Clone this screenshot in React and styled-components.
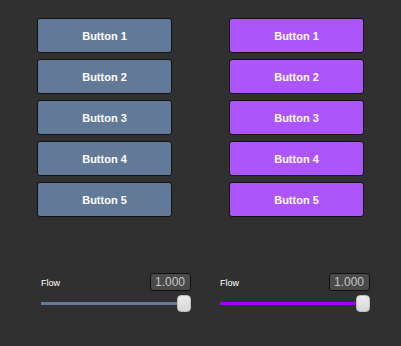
import React from 'react';
import styled, { createGlobalStyle } from 'styled-components';

const GlobalStyle = createGlobalStyle`
    body {
        margin: 0;
        background: #303030;
        font-family: "Liberation Sans", Arial, sans-serif;
    }
`;

const Page = styled.div`
    width: 401px;
    height: 346px;
    background: #303030;
    box-sizing: border-box;
    padding-top: 18px;
`;

const ButtonGrid = styled.div`
    display: grid;
    grid-template-columns: 135px 135px;
    column-gap: 57px;
    padding-left: 37px;
`;

const Column = styled.div`
    display: flex;
    flex-direction: column;
    gap: 6px;
`;

const Button = styled.button`
    height: 35px;
    width: 135px;
    border: 1px solid #111;
    border-radius: 3px;
    background: ${(p) => p.$color};
    color: #fff;
    font-family: "Liberation Sans", Arial, sans-serif;
    font-weight: bold;
    font-size: 11px;
    padding: 0;
`;

const SliderRow = styled.div`
    display: grid;
    grid-template-columns: 150px 150px;
    column-gap: 29px;
    padding-left: 41px;
    margin-top: 56px;
`;

const Slider = styled.div`
    display: flex;
    flex-direction: column;
    gap: 4px;
`;

const Header = styled.div`
    display: flex;
    justify-content: space-between;
    align-items: center;
    height: 18px;
`;

const Label = styled.span`
    color: #fff;
    font-size: 9px;
    padding-top: 1px;
`;

const NumberBox = styled.div`
    width: 38px;
    height: 16px;
    border: 1px solid #111;
    border-radius: 3px;
    background: #4a4a4a;
    color: #c4c4c4;
    font-size: 12px;
    line-height: 16px;
    text-align: center;
    padding-right: 1px;
`;

const TrackArea = styled.div`
    position: relative;
    height: 17px;
    display: flex;
    align-items: center;
`;

const Track = styled.div`
    height: 3px;
    width: 100%;
    background: ${(p) => p.$color};
`;

const Thumb = styled.div`
    position: absolute;
    right: 0;
    top: 0;
    width: 14px;
    height: 17px;
    box-sizing: border-box;
    border-radius: 4px;
    border: 1px solid #bdbdbd;
    background: linear-gradient(#ececec, #d6d6d6);
`;

const FlowSlider = ({ color, value }) => (
    <Slider>
        <Header>
            <Label>Flow</Label>
            <NumberBox>{value}</NumberBox>
        </Header>
        <TrackArea>
            <Track $color={color} />
            <Thumb />
        </TrackArea>
    </Slider>
);

const labels = ['Button 1', 'Button 2', 'Button 3', 'Button 4', 'Button 5'];

const App = () => {
    return (
        <Page>
            <GlobalStyle />
            <ButtonGrid>
                <Column>
                    {labels.map((l) => (
                        <Button key={l} $color="#627a98">{l}</Button>
                    ))}
                </Column>
                <Column>
                    {labels.map((l) => (
                        <Button key={l} $color="#ad55fd">{l}</Button>
                    ))}
                </Column>
            </ButtonGrid>
            <SliderRow>
                <FlowSlider color="#627a98" value="1.000" />
                <FlowSlider color="#9f00ff" value="1.000" />
            </SliderRow>
        </Page>
    );
};

export default App;
